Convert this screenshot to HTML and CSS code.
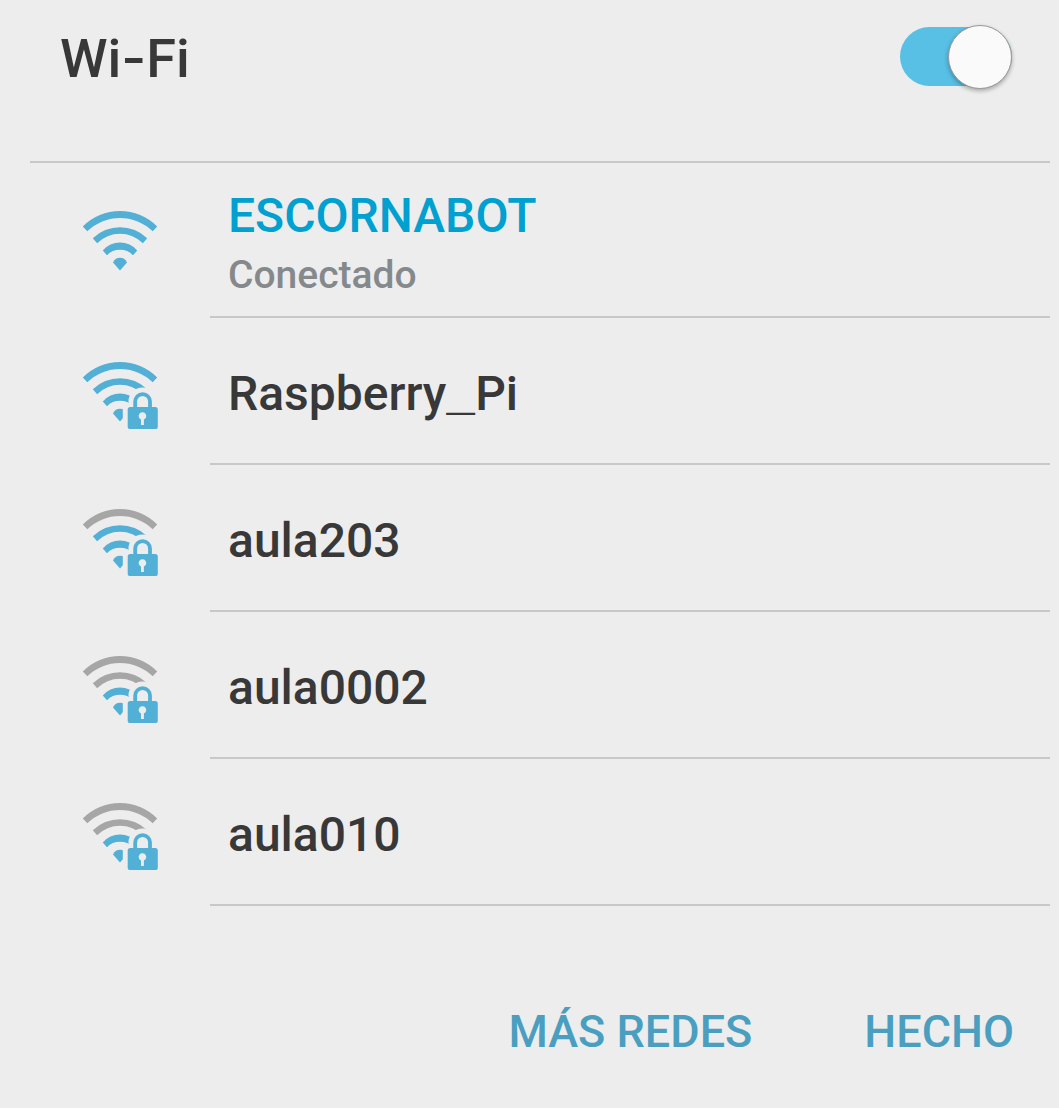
FILE: index.html
```html
<!DOCTYPE html>
<html lang="es">
<head>
<meta charset="utf-8">
<meta name="viewport" content="width=device-width, initial-scale=1">
<title>Wi-Fi</title>
<link rel="stylesheet" href="styles.css">
</head>
<body>
<svg class="sprite" aria-hidden="true">
  <defs>
    <path id="arc-3" d="M12.8 26.5A52.4 52.4 0 0 1 87.2 26.5L82.7 31.3A46.9 46.9 0 0 0 17.3 31.3Z"/>
    <path id="arc-2" d="M22.8 38.2A39.1 39.1 0 0 1 77.2 38.2L72.9 43.2A32.5 32.5 0 0 0 27.1 43.2Z"/>
    <path id="arc-1" d="M32.8 50.4A22.5 22.5 0 0 1 67.2 50.4L63 55.2A18 18 0 0 0 37 55.2Z"/>
    <path id="dot" d="M43 62.6A7.5 7.5 0 0 1 57 62.6L50 70.6Z"/>
    <mask id="lock-gap" maskUnits="userSpaceOnUse" x="0" y="0" width="100" height="90">
      <rect width="100" height="90" fill="#fff"/>
      <circle cx="72.5" cy="50.5" r="14"/>
      <rect x="52.8" y="52" width="40" height="30" rx="1"/>
    </mask>
    <g id="lock">
      <path d="M65.2 57V50.5a7.4 7.4 0 0 1 14.8 0V57" fill="none" stroke="currentColor" stroke-width="3.8"/>
      <path fill-rule="evenodd" d="M60.3 56h24.9a2.6 2.6 0 0 1 2.6 2.6v16.8a2.6 2.6 0 0 1-2.6 2.6H60.3a2.6 2.6 0 0 1-2.6-2.6V58.6a2.6 2.6 0 0 1 2.6-2.6ZM71 68.5V74h2.9V68.5a3.8 3.8 0 1 0-2.9 0Z"/>
    </g>
  </defs>
</svg>
<main class="panel">
  <header class="head">
    <h1 class="title"><label for="wifi">Wi<span class="hyphen">-</span>Fi</label></h1>
    <input class="switch" type="checkbox" role="switch" id="wifi" checked>
  </header>
  <ul class="networks">
    <li class="network network-open">
      <svg class="signal" viewBox="12 10 76 70" aria-hidden="true"><use href="#arc-3"/><use href="#arc-2"/><use href="#arc-1"/><use href="#dot"/></svg>
      <div class="info"><span class="name name-active">ESCORNABOT</span><span class="status">Conectado</span></div>
    </li>
    <li class="network">
      <svg class="signal" viewBox="12 10 76 70" aria-hidden="true"><g mask="url(#lock-gap)"><use href="#arc-3"/><use href="#arc-2"/><use href="#arc-1"/><use href="#dot"/></g><use href="#lock"/></svg>
      <div class="info"><span class="name">Raspberry<span class="underscore">_</span>Pi</span></div>
    </li>
    <li class="network">
      <svg class="signal" viewBox="12 10 76 70" aria-hidden="true"><g mask="url(#lock-gap)"><use class="off" href="#arc-3"/><use href="#arc-2"/><use href="#arc-1"/><use href="#dot"/></g><use href="#lock"/></svg>
      <div class="info"><span class="name">aula203</span></div>
    </li>
    <li class="network">
      <svg class="signal" viewBox="12 10 76 70" aria-hidden="true"><g mask="url(#lock-gap)"><use class="off" href="#arc-3"/><use class="off" href="#arc-2"/><use href="#arc-1"/><use href="#dot"/></g><use href="#lock"/></svg>
      <div class="info"><span class="name">aula0002</span></div>
    </li>
    <li class="network">
      <svg class="signal" viewBox="12 10 76 70" aria-hidden="true"><g mask="url(#lock-gap)"><use class="off" href="#arc-3"/><use class="off" href="#arc-2"/><use href="#arc-1"/><use href="#dot"/></g><use href="#lock"/></svg>
      <div class="info"><span class="name">aula010</span></div>
    </li>
  </ul>
  <footer class="actions">
    <button class="action" type="button">MÁS REDES</button>
    <button class="action" type="button">HECHO</button>
  </footer>
</main>
</body>
</html>
```
FILE: styles.css
```css
*,
*::before {
  box-sizing: border-box;
}

body {
  margin: 0;
  background: #ededed;
  color: #383838;
  font-family: Roboto, sans-serif;
  font-weight: 500;
}

.sprite {
  display: block;
  width: 0;
  height: 0;
}

.panel {
  padding: 0 9px 0 30px;
}

.head {
  display: flex;
  align-items: flex-start;
  justify-content: space-between;
  padding: 24px 38px 68px 30px;
  border-bottom: 2px solid #c8c8c8;
}

.title {
  margin: 0;
  font-size: 54px;
  font-weight: 500;
  line-height: 69px;
}

/* Wider punctuation than Roboto's own */
.hyphen {
  font-family: Inter, sans-serif;
  line-height: 1;
}

.underscore {
  font-family: "Liberation Mono", monospace;
  font-weight: 700;
  line-height: 1;
}

.switch {
  appearance: none;
  display: flex;
  justify-content: flex-end;
  align-items: center;
  width: 112px;
  height: 59px;
  margin: 3px 0 0;
  border-radius: 30px;
  background: #57c0e4;
  cursor: pointer;
}

.switch::before {
  content: "";
  flex: none;
  width: 64px;
  height: 64px;
  border: 1px solid #999;
  border-radius: 50%;
  background: #fafafa;
  box-shadow: 0 2px 4px rgba(0, 0, 0, 0.3);
}

.switch:not(:checked) {
  justify-content: flex-start;
  background: #a6a6a6;
}

.networks {
  margin: 0;
  padding: 0;
  list-style: none;
}

.network {
  display: flex;
}

.signal {
  flex: none;
  width: 76px;
  height: 70px;
  margin: 43px 52px 0;
  color: #52afd6;
  fill: currentColor;
}

.network-open .signal {
  margin-top: 47px;
}

.off {
  fill: #a6a6a6;
}

.info {
  flex: 1;
  display: flex;
  flex-direction: column;
  padding: 47px 18px 40px;
  border-bottom: 2px solid #c8c8c8;
}

.network-open .info {
  padding: 24px 18px 11px;
}

.name {
  font-size: 48px;
  line-height: 58px;
}

.name-active {
  color: #00a0d0;
}

.status {
  color: #85898c;
  font-size: 39px;
  line-height: 60px;
}

.actions {
  display: flex;
  justify-content: flex-end;
  gap: 112px;
  padding: 99px 36px 48px 0;
}

.action {
  padding: 0;
  border: 0;
  background: none;
  color: #4a9fc0;
  font: inherit;
  font-size: 45px;
  line-height: 54px;
  cursor: pointer;
}
```
